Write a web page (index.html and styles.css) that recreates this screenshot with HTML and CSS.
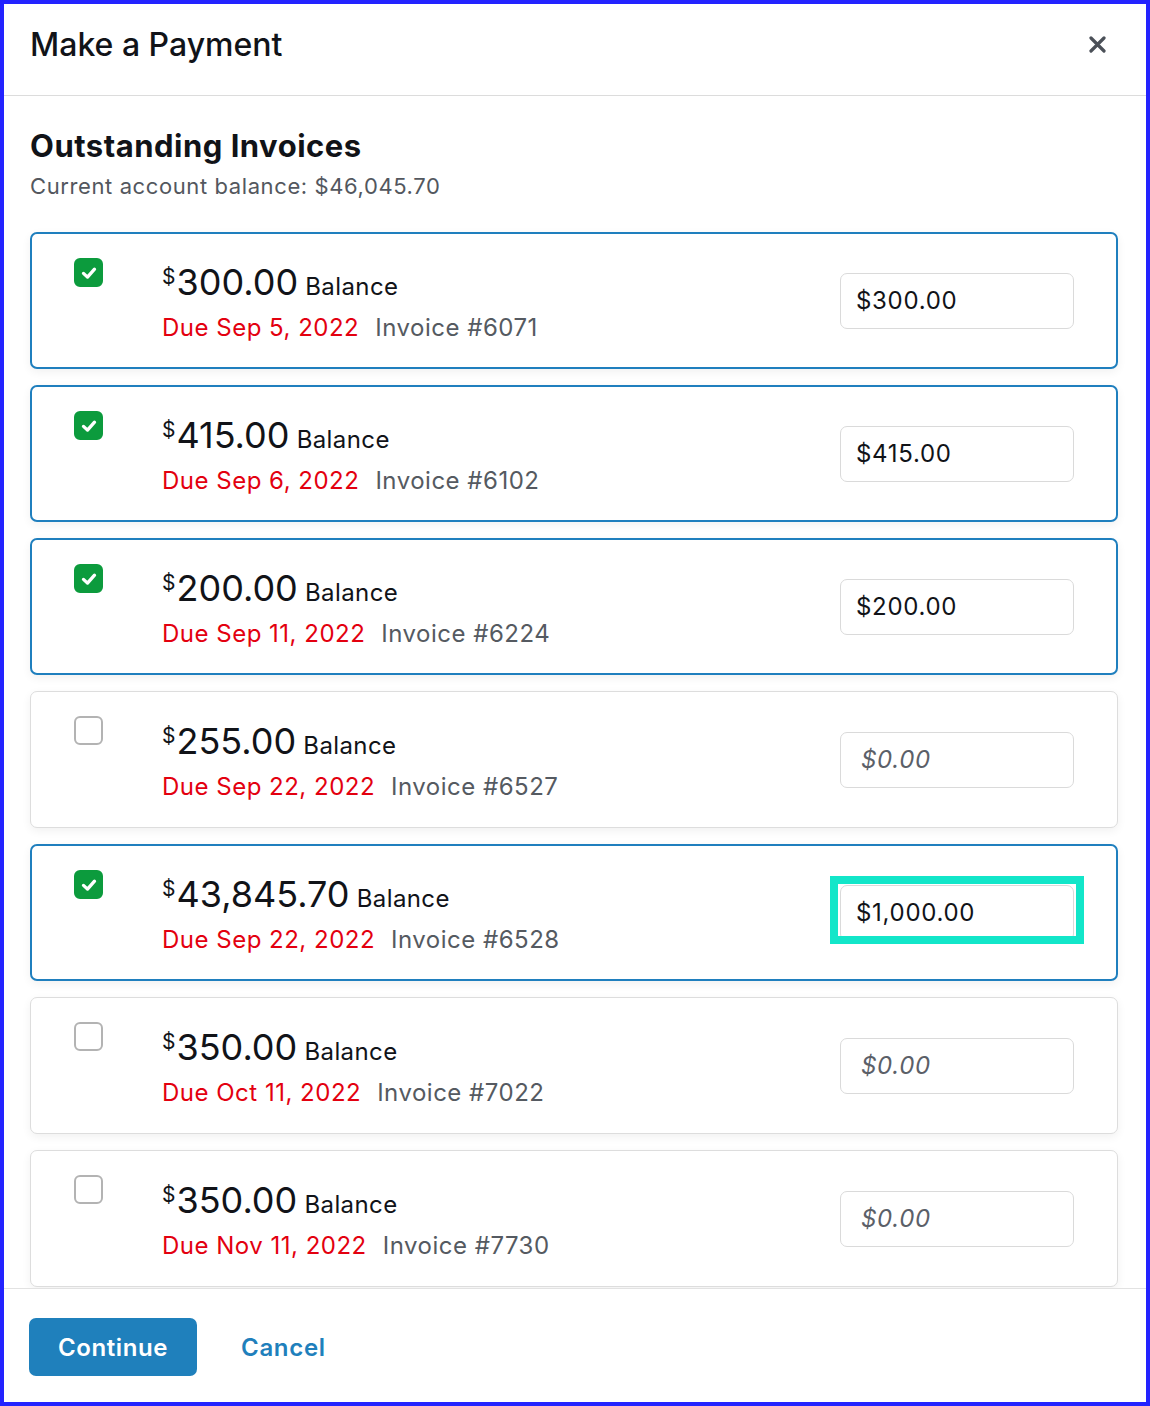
FILE: index.html
```html
<!DOCTYPE html>
<html lang="en">

<head>
    <meta charset="UTF-8">
    <meta name="viewport" content="width=device-width, initial-scale=1.0">
    <title>Make a Payment</title>
    <link rel="stylesheet" href="styles.css">
</head>

<body>
    <div class="modal">
        <div class="modal-header">
            <h1 class="modal-title">Make a Payment</h1>
            <button class="close" aria-label="Close">
                <svg width="17" height="17" viewBox="0 0 17 17">
                    <path d="M2 2 L15 15 M15 2 L2 15" stroke="#4b5058" stroke-width="3.2" stroke-linecap="round" fill="none" />
                </svg>
            </button>
        </div>

        <div class="modal-body">
            <h2 class="section-title">Outstanding Invoices</h2>
            <p class="balance-note">Current account balance: $46,045.70</p>

            <div class="invoice-list">
                <div class="card selected">
                    <span class="check on"><svg viewBox="0 0 16 16"><path d="M4 8.3 L6.9 11 L12 5.2" /></svg></span>
                    <div class="info">
                        <div class="amount"><span class="cur">$</span>300.00<span class="word"> Balance</span></div>
                        <div class="meta"><span class="due">Due Sep 5, 2022</span><span class="num">Invoice #6071</span></div>
                    </div>
                    <div class="pay"><input type="text" value="$300.00"></div>
                </div>

                <div class="card selected">
                    <span class="check on"><svg viewBox="0 0 16 16"><path d="M4 8.3 L6.9 11 L12 5.2" /></svg></span>
                    <div class="info">
                        <div class="amount"><span class="cur">$</span>415.00<span class="word"> Balance</span></div>
                        <div class="meta"><span class="due">Due Sep 6, 2022</span><span class="num">Invoice #6102</span></div>
                    </div>
                    <div class="pay"><input type="text" value="$415.00"></div>
                </div>

                <div class="card selected">
                    <span class="check on"><svg viewBox="0 0 16 16"><path d="M4 8.3 L6.9 11 L12 5.2" /></svg></span>
                    <div class="info">
                        <div class="amount"><span class="cur">$</span>200.00<span class="word"> Balance</span></div>
                        <div class="meta"><span class="due">Due Sep 11, 2022</span><span class="num">Invoice #6224</span></div>
                    </div>
                    <div class="pay"><input type="text" value="$200.00"></div>
                </div>

                <div class="card">
                    <span class="check"></span>
                    <div class="info">
                        <div class="amount"><span class="cur">$</span>255.00<span class="word"> Balance</span></div>
                        <div class="meta"><span class="due">Due Sep 22, 2022</span><span class="num">Invoice #6527</span></div>
                    </div>
                    <div class="pay"><input type="text" placeholder="$0.00"></div>
                </div>

                <div class="card selected">
                    <span class="check on"><svg viewBox="0 0 16 16"><path d="M4 8.3 L6.9 11 L12 5.2" /></svg></span>
                    <div class="info">
                        <div class="amount"><span class="cur">$</span>43,845.70<span class="word"> Balance</span></div>
                        <div class="meta"><span class="due">Due Sep 22, 2022</span><span class="num">Invoice #6528</span></div>
                    </div>
                    <div class="pay">
                        <input type="text" value="$1,000.00">
                        <span class="highlight"></span>
                    </div>
                </div>

                <div class="card">
                    <span class="check"></span>
                    <div class="info">
                        <div class="amount"><span class="cur">$</span>350.00<span class="word"> Balance</span></div>
                        <div class="meta"><span class="due">Due Oct 11, 2022</span><span class="num">Invoice #7022</span></div>
                    </div>
                    <div class="pay"><input type="text" placeholder="$0.00"></div>
                </div>

                <div class="card">
                    <span class="check"></span>
                    <div class="info">
                        <div class="amount"><span class="cur">$</span>350.00<span class="word"> Balance</span></div>
                        <div class="meta"><span class="due">Due Nov 11, 2022</span><span class="num">Invoice #7730</span></div>
                    </div>
                    <div class="pay"><input type="text" placeholder="$0.00"></div>
                </div>
            </div>
        </div>

        <div class="modal-footer">
            <button class="btn-primary">Continue</button>
            <button class="btn-link">Cancel</button>
        </div>
    </div>
</body>

</html>
```

FILE: styles.css
```css
* {
    margin: 0;
    padding: 0;
    box-sizing: border-box;
}

body {
    font-family: Inter, "Liberation Sans", sans-serif;
    color: #111318;
    background: #fff;
}

.modal {
    width: 1150px;
    height: 1406px;
    border: 4px solid #2323ff;
    display: flex;
    flex-direction: column;
    background: #fff;
}

.modal-header {
    height: 92px;
    display: flex;
    align-items: center;
    justify-content: space-between;
    padding: 0 40px 10px 26px;
    border-bottom: 1px solid #dcdcdc;
}

.modal-title {
    font-size: 32px;
    font-weight: 500;
}

.close {
    border: 0;
    background: none;
    display: flex;
    cursor: pointer;
}

.modal-body {
    flex: 1;
    padding: 32px 28px 0 26px;
    overflow: hidden;
}

.section-title {
    font-size: 31px;
    font-weight: 700;
    line-height: 36px;
    letter-spacing: 0.5px;
}

.balance-note {
    font-size: 22px;
    line-height: 28px;
    color: #53575e;
    margin-top: 8px;
    letter-spacing: 0.6px;
}

.invoice-list {
    display: flex;
    flex-direction: column;
    gap: 16px;
    margin-top: 32px;
}

.card {
    height: 137px;
    display: flex;
    align-items: center;
    padding: 0 43px;
    border: 1px solid #dddddd;
    border-radius: 7px;
    background: #fff;
    box-shadow: 0 3px 10px rgba(0, 0, 0, 0.06);
}

.card.selected {
    border: 2px solid #1f7fbe;
    padding: 0 42px;
}

.check {
    align-self: flex-start;
    margin-top: 24px;
    width: 29px;
    height: 29px;
    border: 2.5px solid #b3b3b3;
    border-radius: 6px;
    flex-shrink: 0;
    display: flex;
    align-items: center;
    justify-content: center;
}

.check.on {
    background: #0c9b3d;
    border-color: #0c9b3d;
}

.check svg {
    width: 22px;
    height: 22px;
}

.check svg path {
    fill: none;
    stroke: #fff;
    stroke-width: 2.4;
    stroke-linecap: round;
    stroke-linejoin: round;
}

.info {
    margin-left: 59px;
}

.amount {
    font-size: 36px;
    line-height: 40px;
}

.amount .cur {
    font-size: 21px;
    vertical-align: 11px;
    margin-right: 1px;
}

.amount .word {
    font-size: 24px;
    letter-spacing: 0.4px;
}

.meta {
    margin-top: 5px;
    font-size: 24px;
    line-height: 32px;
    letter-spacing: 0.5px;
}

.due {
    color: #e3000f;
    margin-right: 16px;
}

.num {
    color: #555a61;
}

.pay {
    margin-left: auto;
    position: relative;
}

.pay input {
    width: 234px;
    height: 56px;
    border: 1px solid #dadada;
    border-radius: 7px;
    padding: 0 15px;
    font-family: Inter, "Liberation Sans", sans-serif;
    font-size: 24px;
    letter-spacing: 0.7px;
    color: #111318;
    background: #fff;
    outline: none;
}

.pay input:placeholder-shown {
    padding-left: 20px;
}

.pay input::placeholder {
    color: #5b6068;
    font-style: italic;
    opacity: 1;
}

.highlight {
    position: absolute;
    left: -10px;
    top: -9px;
    width: 254px;
    height: 68px;
    border: 8px solid #12e6c9;
    pointer-events: none;
}

.modal-footer {
    border-top: 1px solid #e2e2e2;
    padding: 29px 26px 26px 25px;
    display: flex;
    align-items: center;
    gap: 44px;
}

.btn-primary {
    height: 58px;
    width: 168px;
    border: 0;
    border-radius: 7px;
    background: #1f80bc;
    color: #fff;
    font-family: Inter, "Liberation Sans", sans-serif;
    font-size: 24px;
    font-weight: 600;
    letter-spacing: 0.6px;
    cursor: pointer;
}

.btn-link {
    border: 0;
    background: none;
    color: #1f80bc;
    font-family: Inter, "Liberation Sans", sans-serif;
    font-size: 24px;
    font-weight: 600;
    letter-spacing: 0.7px;
    cursor: pointer;
}
```
